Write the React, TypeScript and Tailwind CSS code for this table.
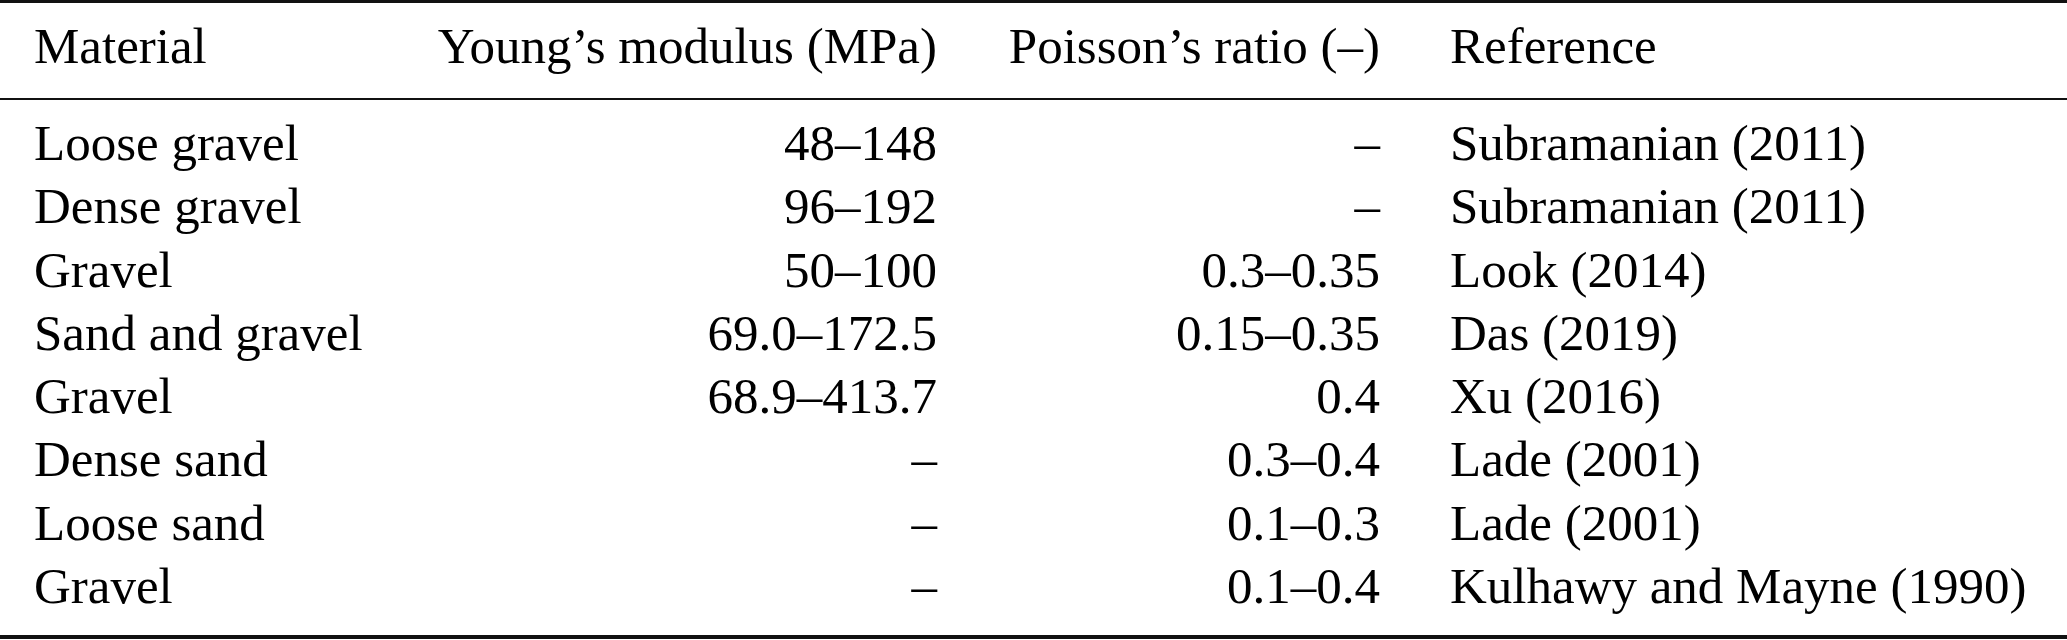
const rows = [
  { material: "Loose gravel", modulus: "48–148", poisson: "–", ref: "Subramanian (2011)" },
  { material: "Dense gravel", modulus: "96–192", poisson: "–", ref: "Subramanian (2011)" },
  { material: "Gravel", modulus: "50–100", poisson: "0.3–0.35", ref: "Look (2014)" },
  { material: "Sand and gravel", modulus: "69.0–172.5", poisson: "0.15–0.35", ref: "Das (2019)" },
  { material: "Gravel", modulus: "68.9–413.7", poisson: "0.4", ref: "Xu (2016)" },
  { material: "Dense sand", modulus: "–", poisson: "0.3–0.4", ref: "Lade (2001)" },
  { material: "Loose sand", modulus: "–", poisson: "0.1–0.3", ref: "Lade (2001)" },
  { material: "Gravel", modulus: "–", poisson: "0.1–0.4", ref: "Kulhawy and Mayne (1990)" },
]

const cols = "grid grid-cols-[332px_501px_373px_1fr] gap-x-[70px] pl-[34px] whitespace-nowrap"

export default function App() {
  return (
    <div className="w-[2067px] h-[640px] bg-white text-black font-['Liberation_Serif','Times_New_Roman',serif] text-[51px]">
      <div className="border-t-[3px] border-b-[2px] border-[#111] pt-[11px] pb-[20px]">
        <div className={`${cols} h-[64px] leading-[64px]`}>
          <div>Material</div>
          <div className="text-right">Young’s modulus (MPa)</div>
          <div className="text-right">Poisson’s ratio (–)</div>
          <div>Reference</div>
        </div>
      </div>
      <div className="border-b-[4px] border-[#111] pt-[12px] pb-[17px]">
        {rows.map((r, i) => (
          <div key={i} className={`${cols} h-[63.3px] leading-[63.3px]`}>
            <div>{r.material}</div>
            <div className="text-right">{r.modulus}</div>
            <div className="text-right">{r.poisson}</div>
            <div>{r.ref}</div>
          </div>
        ))}
      </div>
    </div>
  )
}
